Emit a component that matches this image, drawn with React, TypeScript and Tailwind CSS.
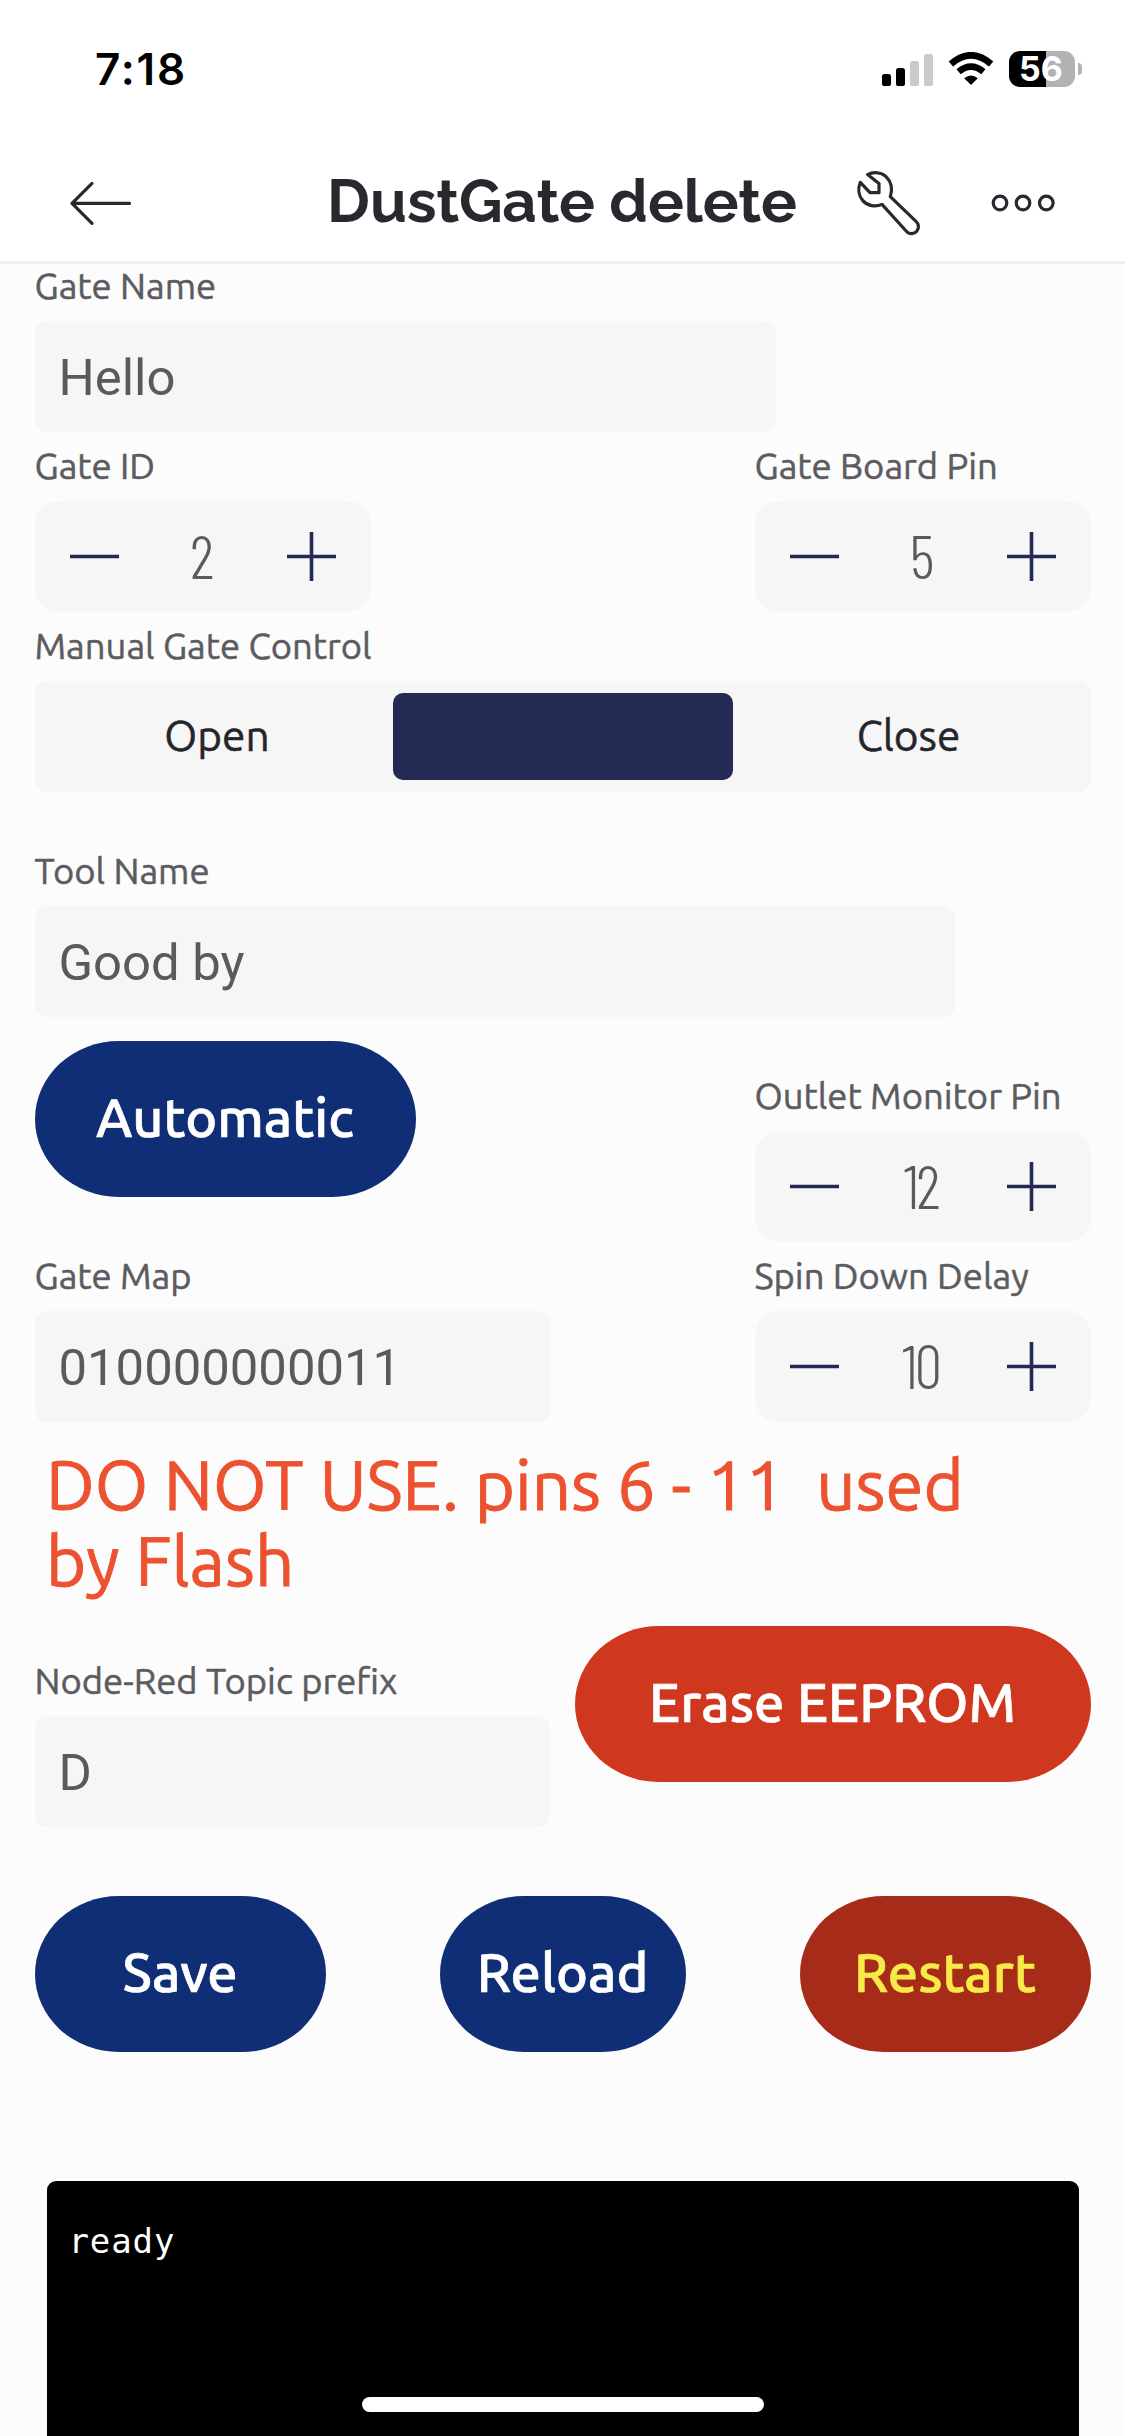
import type { ReactNode } from "react";

function StatusBar() {
  return (
    <div className="flex h-[144px] items-start justify-between pr-[43px] pl-[95px]">
      <div className="mt-[43px] font-[Inter,sans-serif] text-[44px] leading-[52px] font-semibold tracking-[1.8px] text-black">
        7:18
      </div>
      <div className="mt-[51px] flex h-9 items-center">
        <svg width="51" height="32" viewBox="0 0 51 32" className="mt-[1px]">
          <rect x="0" y="20" width="9" height="12" rx="2.6" fill="#000" />
          <rect x="14" y="14" width="9" height="18" rx="2.6" fill="#000" />
          <rect x="28" y="7" width="9" height="25" rx="2.6" fill="#cacaca" />
          <rect x="42" y="0" width="9" height="32" rx="2.6" fill="#cacaca" />
        </svg>
        <svg width="46" height="34" viewBox="0 0 46 34" className="ml-[15px]">
          <path d="M23 33 L16.2 26.2 Q23 21 29.8 26.2 Z" fill="#000" />
          <path d="M10.6 19.8 Q23 9.6 35.4 19.8" fill="none" stroke="#000" strokeWidth="6.6" />
          <path d="M2.9 12 Q23 -5.4 43.1 12" fill="none" stroke="#000" strokeWidth="6.6" />
        </svg>
        <div className="ml-[15px] flex h-9 w-[66px] items-center justify-center rounded-[11px] bg-linear-to-r from-black from-[56%] to-[#b2b2b2] to-[56%] pr-[2px] font-[Inter,sans-serif] text-[34px] leading-[36px] font-bold text-white">
          56
        </div>
        <div className="ml-[3px] h-3 w-1 rounded-r-full bg-[#b2b2b2]" />
      </div>
    </div>
  );
}

function Header() {
  return (
    <header className="flex h-[120px] items-center border-b-[3px] border-[#efefef] pl-[68px] text-[#28282f]">
      <svg width="66" height="48" viewBox="0 0 66 48" fill="none" stroke="currentColor" strokeWidth="3.2" strokeLinecap="round" strokeLinejoin="round">
        <path d="M4 24.4H61.5M24 4.4L4 24.4L24 44.4" />
      </svg>
      <h1 className="mt-[-3px] ml-[193px] font-[Raleway,Lato,sans-serif] text-[59.9px] leading-[72px] font-bold whitespace-nowrap">
        DustGate delete
      </h1>
      <div className="flex flex-1 items-center justify-end pr-[69px]">
        <svg width="68" height="68" viewBox="0 0 68 68" fill="none" stroke="currentColor" strokeWidth="3.2" strokeLinejoin="round">
          <path d="M5.3 13.3L15 23.7H24V14.5L12.6 5.6C18 2.6 26 3 31 7.6C36.6 13 37.6 20.5 35.3 27.7L61 52.4A6.9 6.9 0 0 1 52 63L27 35.4C20.5 38.4 12.4 37 7.8 31.6C3.4 26.6 2.8 19.4 5.3 13.3Z" />
        </svg>
        <svg width="66" height="20" viewBox="0 0 66 20" fill="none" stroke="currentColor" strokeWidth="3.2" className="ml-[67px]">
          <circle cx="10" cy="10" r="6.8" />
          <circle cx="33" cy="10" r="6.8" />
          <circle cx="56.3" cy="10" r="6.8" />
        </svg>
      </div>
    </header>
  );
}

function Field({ label, width, children }: { label: string; width: string; children: ReactNode }) {
  return (
    <div className={width}>
      <div className="mb-[14px] h-[43px] text-[36.4px] leading-[44px] whitespace-nowrap text-[#5b5b60] [-webkit-text-stroke:0.5px_#5b5b60]">
        {label}
      </div>
      {children}
    </div>
  );
}

function TextBox({ value }: { value: string }) {
  return (
    <div className="flex h-[111px] items-center rounded-[12px] bg-[#f6f6f6] pt-[3px] pl-6 font-[Roboto,sans-serif] text-[50.8px] text-[#5a5a5d]">
      {value}
    </div>
  );
}

function Stepper({ value }: { value: number }) {
  return (
    <div className="grid h-[111px] grid-cols-[49px_1fr_49px] items-center rounded-[24px] bg-[#f6f6f6] pr-[35px] pl-[35.5px]">
      <svg width="49" height="49" viewBox="0 0 49 49" stroke="#242855" strokeWidth="3.6">
        <path d="M0 24.5H49" />
      </svg>
      <span className="pr-[4px] pb-[6px] text-center font-['Barlow_Condensed','Roboto_Condensed',sans-serif] text-[61.5px] leading-[60px] font-light tracking-[-2.8px] text-[#5a5a5d]">
        {value}
      </span>
      <svg width="49" height="49" viewBox="0 0 49 49" stroke="#242855" strokeWidth="3.6">
        <path d="M0 24.5H49M24.5 0V49" />
      </svg>
    </div>
  );
}

function PillButton({ className, children }: { className: string; children: ReactNode }) {
  return (
    <button className={`flex h-[156px] items-center justify-center rounded-[84px/78px] pb-[4px] text-[54px] font-medium whitespace-nowrap [-webkit-text-stroke:0.7px] ${className}`}>
      {children}
    </button>
  );
}

export default function App() {
  return (
    <div className="relative flex h-[2436px] w-[1125px] flex-col overflow-hidden bg-[#fcfcfc] font-[Ubuntu,'Noto_Sans',sans-serif]">
      <div className="bg-white">
        <StatusBar />
        <Header />
      </div>

      <main className="flex flex-1 flex-col px-[34.5px]">
        <Field label="Gate Name" width="w-[741px]">
          <TextBox value="Hello" />
        </Field>

        <div className="mt-3 flex justify-between">
          <Field label="Gate ID" width="w-[336px]">
            <Stepper value={2} />
          </Field>
          <Field label="Gate Board Pin" width="w-[336px]">
            <Stepper value={5} />
          </Field>
        </div>

        <div className="mt-3">
          <Field label="Manual Gate Control" width="w-full">
            <div className="grid h-[111px] grid-cols-[1fr_340px_1fr] items-center rounded-[12px] bg-[#f6f6f6] text-[42.4px] text-[#24242b] [-webkit-text-stroke:0.5px]">
              <div className="pb-[1px] pl-[7px] text-center">Open</div>
              <div className="h-[87px] rounded-[10px] bg-[#252a55]" />
              <div className="pr-[6px] pb-[1px] text-center">Close</div>
            </div>
          </Field>
        </div>

        <div className="mt-[57px]">
          <Field label="Tool Name" width="w-[920px]">
            <TextBox value="Good by" />
          </Field>
        </div>

        <div className="mt-6 flex h-[201px] justify-between">
          <PillButton className="w-[381px] bg-[#102e75] text-white">Automatic</PillButton>
          <div className="self-end">
            <Field label="Outlet Monitor Pin" width="w-[336px]">
              <Stepper value={12} />
            </Field>
          </div>
        </div>

        <div className="mt-3 flex justify-between">
          <Field label="Gate Map" width="w-[515px]">
            <TextBox value="010000000011" />
          </Field>
          <Field label="Spin Down Delay" width="w-[336px]">
            <Stepper value={10} />
          </Field>
        </div>

        <p className="mt-[25px] mb-[-1px] pl-[11.5px] text-[68.9px] leading-[76px] whitespace-pre text-[#ec5230] [-webkit-text-stroke:0.9px]">
          {"DO NOT USE. pins 6 - 11  used\nby Flash"}
        </p>

        <div className="mt-7 flex h-[201px] justify-between">
          <div className="self-end">
            <Field label="Node-Red Topic prefix" width="w-[515px]">
              <TextBox value="D" />
            </Field>
          </div>
          <PillButton className="w-[516px] bg-[#cf381e] text-white">Erase EEPROM</PillButton>
        </div>

        <div className="mt-[69px] flex justify-between">
          <PillButton className="w-[291px] bg-[#102e75] text-white">Save</PillButton>
          <PillButton className="w-[246px] bg-[#102e75] text-white">Reload</PillButton>
          <PillButton className="w-[291px] bg-[#a62b18] text-[#f5ea48]">Restart</PillButton>
        </div>

        <div className="mx-[12px] mt-[129px] flex-1 rounded-t-[9px] bg-black pt-[36px] pl-[22px]">
          <div className="font-['DejaVu_Sans_Mono',monospace] text-[34px] leading-[48px] tracking-[0.9px] text-white">
            ready
          </div>
        </div>
      </main>

      <div className="absolute bottom-6 left-[362px] h-[15px] w-[402px] rounded-full bg-white" />
    </div>
  );
}
